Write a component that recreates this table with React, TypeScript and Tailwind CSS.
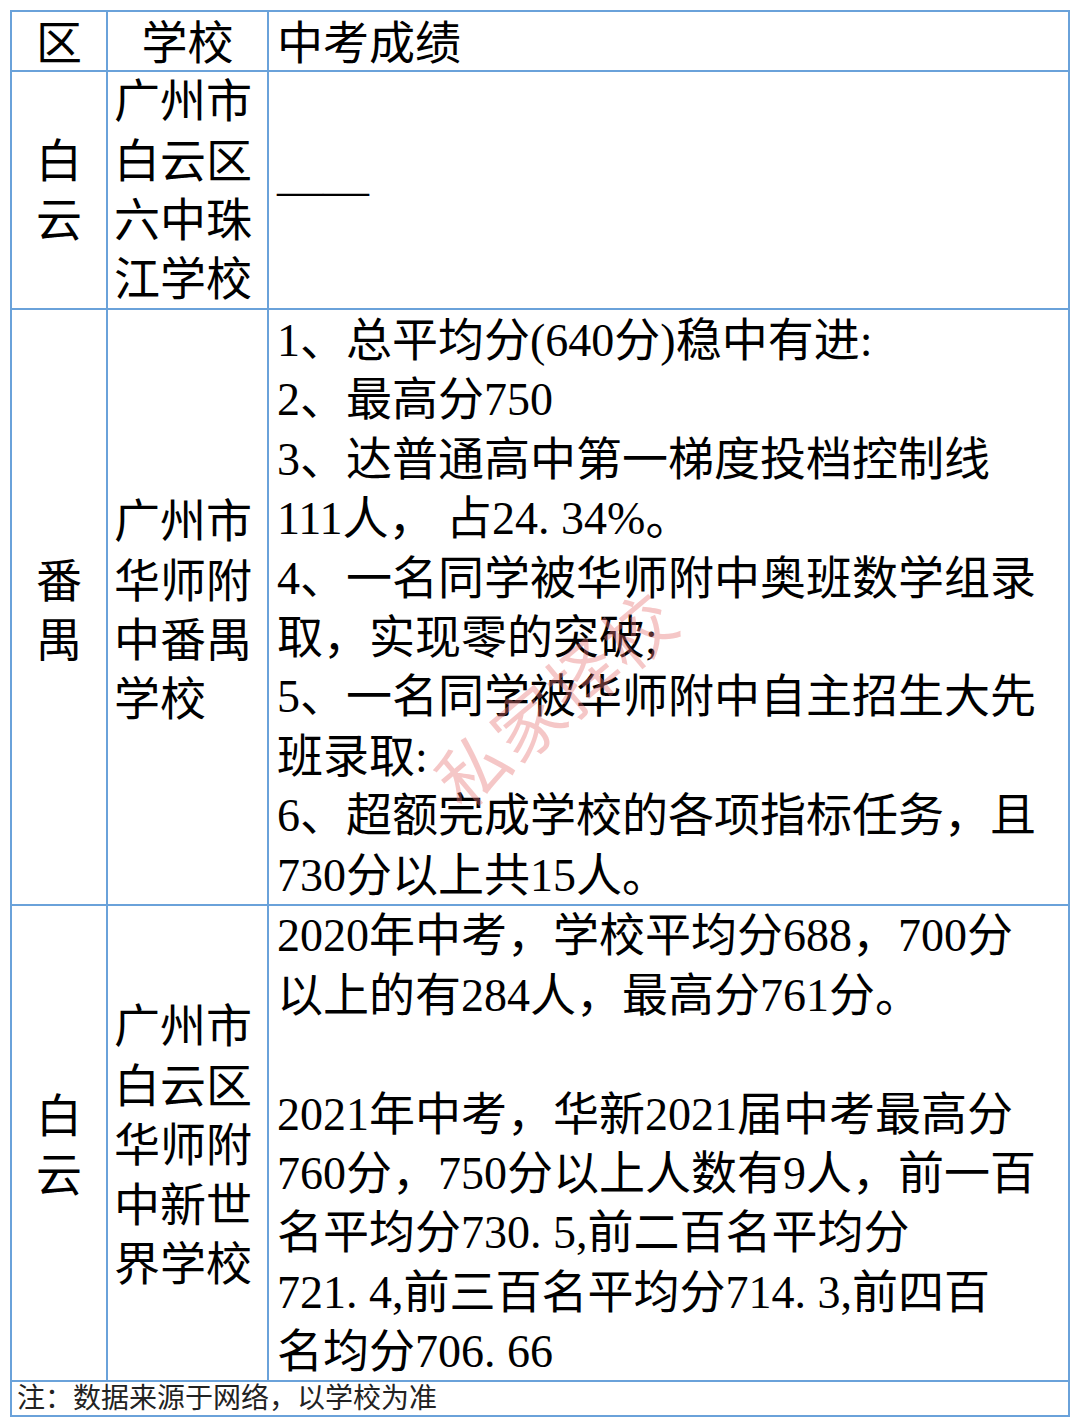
export default function App() {
  const font = "[font-family:'Liberation_Serif','Noto_Sans_CJK_SC',serif]";

  return (
    <div className={`min-h-[1427px] bg-white pt-[10px] pl-[10px] text-black ${font}`}>
      <div className="relative w-[1060px]">
        <div className="grid grid-cols-[94px_159px_799px] gap-[2px] bg-[#6aa2da] p-[2px] text-[46px] leading-[59.4px]">
          {/* header */}
          <div className="flex h-[58px] items-center justify-center bg-white pt-[6px]">区</div>
          <div className="flex h-[58px] items-center justify-center bg-white pt-[6px]">学校</div>
          <div className="flex h-[58px] items-center bg-white pl-[8px] pt-[6px]">中考成绩</div>

          {/* 白云 / 六中珠江 */}
          <div className="flex h-[236px] items-center justify-center bg-white pt-[2px] text-center">
            白<br />云
          </div>
          <div className="flex h-[236px] items-center bg-white pl-[6px] pt-[2px]">
            <div>
              广州市<br />白云区<br />六中珠<br />江学校
            </div>
          </div>
          <div className="flex h-[236px] items-center bg-white pl-[8px] pt-[2px]">——</div>

          {/* 番禺 */}
          <div className="flex h-[594px] items-center justify-center bg-white pt-[8px] text-center">
            番<br />禺
          </div>
          <div className="flex h-[594px] items-center bg-white pl-[6px] pt-[8px]">
            <div>
              广州市<br />华师附<br />中番禺<br />学校
            </div>
          </div>
          <div className="flex h-[594px] items-center whitespace-nowrap bg-white pl-[8px] pt-[2px]">
            <div>
              1、总平均分(640分)稳中有进:<br />
              2、最高分750<br />
              3、达普通高中第一梯度投档控制线<br />
              111人， 占24. 34%。<br />
              4、一名同学被华师附中奥班数学组录<br />
              取，实现零的突破;<br />
              5、一名同学被华师附中自主招生大先<br />
              班录取:<br />
              6、超额完成学校的各项指标任务，且<br />
              730分以上共15人。
            </div>
          </div>

          {/* 白云 / 新世界 */}
          <div className="flex h-[474px] items-center justify-center bg-white pt-[6px] text-center">
            白<br />云
          </div>
          <div className="flex h-[474px] items-center bg-white pl-[6px] pt-[6px]">
            <div>
              广州市<br />白云区<br />华师附<br />中新世<br />界学校
            </div>
          </div>
          <div className="flex h-[474px] items-center whitespace-nowrap bg-white pl-[8px] pt-[2px]">
            <div>
              2020年中考，学校平均分688，700分<br />
              以上的有284人，最高分761分。<br />
              <br />
              2021年中考，华新2021届中考最高分<br />
              760分，750分以上人数有9人，前一百<br />
              名平均分730. 5,前二百名平均分<br />
              721. 4,前三百名平均分714. 3,前四百<br />
              名均分706. 66
            </div>
          </div>

          {/* note */}
          <div className="col-span-3 flex h-[33px] items-center bg-white pl-[5px] text-[28px] leading-[33px] text-[#222]">
            注：数据来源于网络，以学校为准
          </div>
        </div>

        {/* watermark */}
        <div className="pointer-events-none absolute left-[400px] top-[652px] -rotate-[40deg] whitespace-nowrap text-[70px] leading-none tracking-[2px] text-[#e57373]/40 [font-family:'Noto_Sans_CJK_SC',sans-serif]">
          私家择校
        </div>
      </div>
    </div>
  );
}
